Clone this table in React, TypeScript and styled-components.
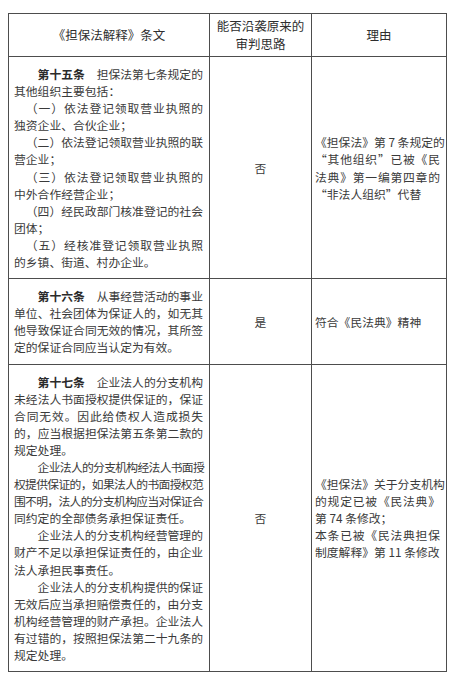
import styled, { createGlobalStyle } from 'styled-components';

const GlobalStyle = createGlobalStyle`
  body {
    margin: 0;
    background: #ffffff;
    font-family: "Noto Sans CJK SC", "Noto Sans", sans-serif;
    color: #333333;
  }
`;

const Page = styled.div`
  padding: 13px 10px 0 8px;
`;

const Table = styled.table`
  width: 438px;
  border-collapse: collapse;
  table-layout: fixed;
  font-size: 11.8px;
  line-height: 17.1px;
`;

const HeadCell = styled.th`
  border: 1px solid #4d4d4d;
  height: 42px;
  padding: 0;
  font-weight: 400;
  font-size: 12.5px;
  line-height: 18px;
  color: #2e2e2e;
  text-align: center;
  vertical-align: middle;
`;

const ArticleCell = styled.td`
  border: 1px solid #4d4d4d;
  padding: 8px 6px 8px 5px;
  vertical-align: top;
  color: #3a3a3a;
`;

const VerdictCell = styled.td`
  border: 1px solid #4d4d4d;
  text-align: center;
  vertical-align: middle;
  color: #3a3a3a;
`;

const ReasonCell = styled.td`
  border: 1px solid #4d4d4d;
  padding: 0 6px 0 3px;
  vertical-align: middle;
  color: #3a3a3a;
`;

const Line = styled.div<{ $indent?: number; $full?: boolean; $tight?: boolean }>`
  white-space: nowrap;
  text-indent: ${(p) => (p.$indent ?? 0)}em;
  text-align: justify;
  text-align-last: ${(p) => (p.$full ? 'justify' : 'left')};
  letter-spacing: ${(p) => (p.$tight ? '-0.7px' : '0')};
`;

const Heading = styled.b`
  font-weight: 700;
  color: #2a2a2a;
`;

type L = { t: string; head?: string; indent?: number; full?: boolean; tight?: boolean };

const row15: L[] = [
  { head: '第十五条', t: '\u3000担保法第七条规定的', indent: 2, full: true },
  { t: '其他组织主要包括：' },
  { t: '（一）依法登记领取营业执照的', indent: 1, full: true },
  { t: '独资企业、合伙企业；' },
  { t: '（二）依法登记领取营业执照的联', indent: 1, full: true },
  { t: '营企业；' },
  { t: '（三）依法登记领取营业执照的', indent: 1, full: true },
  { t: '中外合作经营企业；' },
  { t: '（四）经民政部门核准登记的社会', indent: 1, full: true },
  { t: '团体；' },
  { t: '（五）经核准登记领取营业执照', indent: 1, full: true },
  { t: '的乡镇、街道、村办企业。' },
];

const row16: L[] = [
  { head: '第十六条', t: '\u3000从事经营活动的事业', indent: 2, full: true },
  { t: '单位、社会团体为保证人的，如无其', full: true },
  { t: '他导致保证合同无效的情况，其所签', full: true },
  { t: '定的保证合同应当认定为有效。' },
];

const row17: L[] = [
  { head: '第十七条', t: '\u3000企业法人的分支机构', indent: 2, full: true },
  { t: '未经法人书面授权提供保证的，保证', full: true },
  { t: '合同无效。因此给债权人造成损失', full: true },
  { t: '的，应当根据担保法第五条第二款的', full: true },
  { t: '规定处理。' },
  { t: '企业法人的分支机构经法人书面授', indent: 2, full: true, tight: true },
  { t: '权提供保证的，如果法人的书面授权范', full: true, tight: true },
  { t: '围不明，法人的分支机构应当对保证合', full: true, tight: true },
  { t: '同约定的全部债务承担保证责任。' },
  { t: '企业法人的分支机构经营管理的', indent: 2, full: true },
  { t: '财产不足以承担保证责任的，由企业', full: true },
  { t: '法人承担民事责任。' },
  { t: '企业法人的分支机构提供的保证', indent: 2, full: true },
  { t: '无效后应当承担赔偿责任的，由分支', full: true },
  { t: '机构经营管理的财产承担。企业法人', full: true },
  { t: '有过错的，按照担保法第二十九条的', full: true },
  { t: '规定处理。' },
];

const reason15: L[] = [
  { t: '《担保法》第 7 条规定的', full: true },
  { t: '“其他组织”已被《民', full: true },
  { t: '法典》第一编第四章的', full: true },
  { t: '“非法人组织”代替' },
];

const reason16: L[] = [{ t: '符合《民法典》精神' }];

const reason17: L[] = [
  { t: '《担保法》关于分支机构', full: true },
  { t: '的规定已被《民法典》', full: true },
  { t: '第 74 条修改；' },
  { t: '本条已被《民法典担保', full: true },
  { t: '制度解释》第 11 条修改' },
];

const Lines = ({ lines }: { lines: L[] }): JSX.Element => (
  <>
    {lines.map((l, i) => (
      <Line key={i} $indent={l.indent} $full={l.full} $tight={l.tight}>
        {l.head && <Heading>{l.head}</Heading>}
        {l.t}
      </Line>
    ))}
  </>
);

const rows = [
  { article: row15, verdict: '否', reason: reason15 },
  { article: row16, verdict: '是', reason: reason16 },
  { article: row17, verdict: '否', reason: reason17 },
];

const App = (): JSX.Element => (
  <>
    <GlobalStyle />
    <Page>
      <Table>
        <colgroup>
          <col style={{ width: 201 }} />
          <col style={{ width: 102 }} />
          <col style={{ width: 135 }} />
        </colgroup>
        <thead>
          <tr>
            <HeadCell>《担保法解释》条文</HeadCell>
            <HeadCell>
              能否沿袭原来的
              <br />
              审判思路
            </HeadCell>
            <HeadCell>理由</HeadCell>
          </tr>
        </thead>
        <tbody>
          {rows.map((r, i) => (
            <tr key={i}>
              <ArticleCell><Lines lines={r.article} /></ArticleCell>
              <VerdictCell>{r.verdict}</VerdictCell>
              <ReasonCell><Lines lines={r.reason} /></ReasonCell>
            </tr>
          ))}
        </tbody>
      </Table>
    </Page>
  </>
);

export default App;
